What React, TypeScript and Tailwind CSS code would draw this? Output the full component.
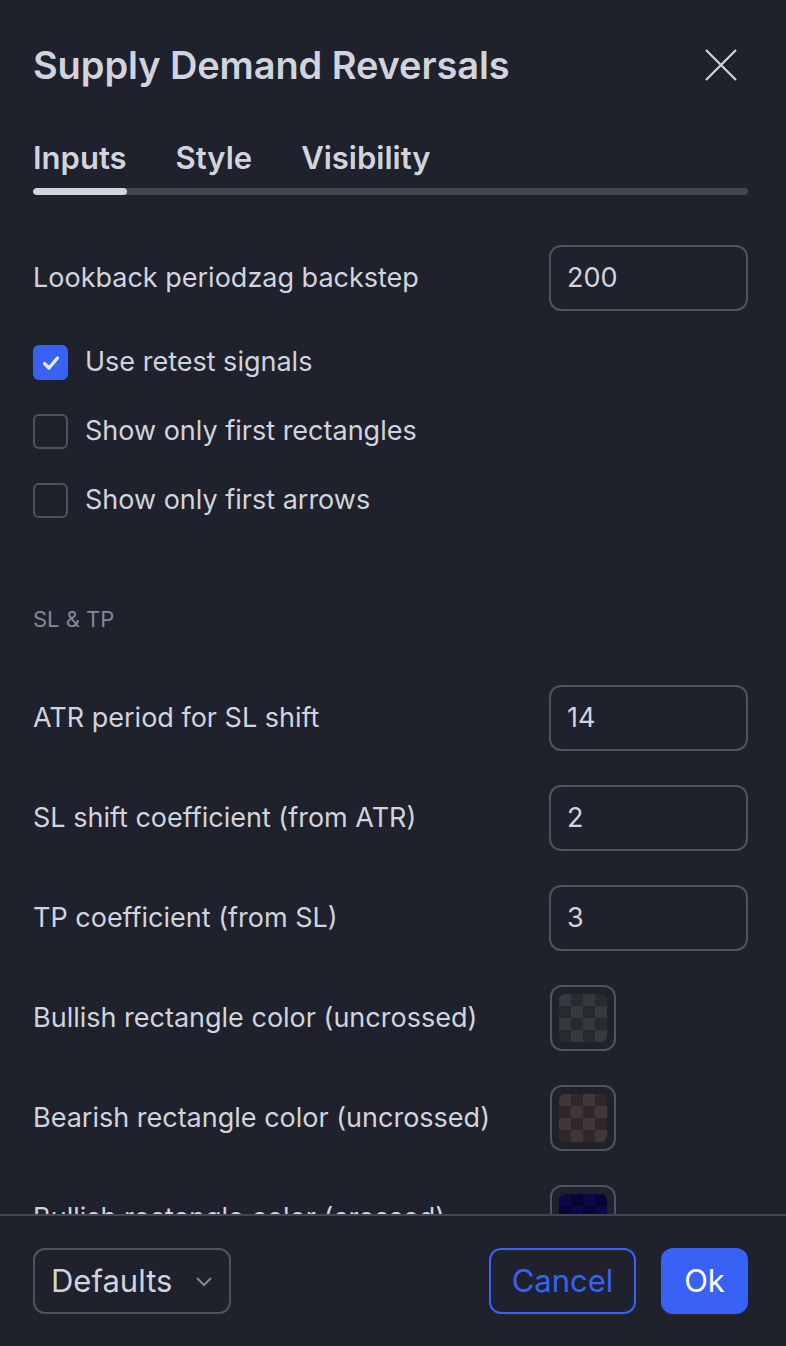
import React from "react";

const TEXT = "text-[#d1d4dc]";

function Checker({ a, b }: { a: string; b: string }) {
  const cells = [];
  for (let r = 0; r < 4; r++) {
    for (let c = 0; c < 4; c++) {
      cells.push(
        <div key={r * 4 + c} style={{ background: (r + c) % 2 === 0 ? a : b }} />
      );
    }
  }
  return (
    <div className="grid h-[48px] w-[48px] grid-cols-4 grid-rows-4 overflow-hidden rounded-[6px]">
      {cells}
    </div>
  );
}

function NumRow({ label, value }: { label: string; value: string }) {
  return (
    <div className="flex h-[100px] items-center justify-between">
      <span className="text-[27px]">{label}</span>
      <div className="flex h-[66px] w-[199px] items-center rounded-[12px] border-2 border-[#50535e] pl-[16px] text-[27px]">
        {value}
      </div>
    </div>
  );
}

function ColorRow({ label, a, b }: { label: string; a: string; b: string }) {
  return (
    <div className="flex h-[100px] items-center">
      <span className="w-[517px] text-[27px]">{label}</span>
      <div className="flex h-[66px] w-[66px] items-center justify-center rounded-[12px] border-2 border-[#50535e]">
        <Checker a={a} b={b} />
      </div>
    </div>
  );
}

function Check({ label, checked }: { label: string; checked?: boolean }) {
  return (
    <div className="flex h-[69px] items-center gap-[17px]">
      {checked ? (
        <div className="flex h-[35px] w-[35px] items-center justify-center rounded-[6px] bg-[#3861f6]">
          <svg width="22" height="22" viewBox="0 0 22 22" fill="none">
            <path d="M4.5 11.5l4.5 4.5 8.5-10" stroke="#e8eaf0" strokeWidth="3.4" strokeLinecap="round" strokeLinejoin="round" />
          </svg>
        </div>
      ) : (
        <div className="h-[35px] w-[35px] rounded-[6px] border-2 border-[#50535e]" />
      )}
      <span className="text-[27px]">{label}</span>
    </div>
  );
}

export default function App() {
  return (
    <div
      className={`flex h-[1346px] w-[786px] flex-col overflow-hidden bg-[#1f212c] ${TEXT}`}
      style={{ fontFamily: "Inter, 'Noto Sans', sans-serif" }}
    >
      <div className="flex items-center justify-between pl-[33px] pr-[38px] pt-[43px]">
        <h1 className="text-[38px] font-semibold leading-[44px] tracking-[-0.1px]">Supply Demand Reversals</h1>
        <svg width="34" height="34" viewBox="0 0 34 34" className="mr-[10px]">
          <path d="M2 2L32 32M32 2L2 32" stroke="#d1d4dc" strokeWidth="2.2" />
        </svg>
      </div>

      <div className="pl-[33px] pr-[38px] pt-[53px]">
        <div className="flex gap-[49px] text-[31px] font-semibold leading-[36px]">
          <span>Inputs</span>
          <span>Style</span>
          <span>Visibility</span>
        </div>
        <div className="mt-[12px] flex h-[7px] w-[715px] overflow-hidden rounded-full bg-[#434651]">
          <div className="h-full w-[94px] rounded-full bg-[#d1d4dc]" />
        </div>
      </div>

      <div className="flex-1 overflow-hidden pl-[33px] pr-[38px] pt-[50px]">
        <div className="flex h-[66px] items-center justify-between">
          <span className="text-[27px]">Lookback periodzag backstep</span>
          <div className="flex h-[66px] w-[199px] items-center rounded-[12px] border-2 border-[#50535e] pl-[16px] text-[27px]">
            200
          </div>
        </div>
        <div className="mt-[17px]">
          <Check label="Use retest signals" checked />
          <Check label="Show only first rectangles" />
          <Check label="Show only first arrows" />
        </div>
        <div className="mt-[71px] text-[22px] leading-[26px] text-[#868993]">SL &amp; TP</div>
        <div className="mt-[36px]">
          <NumRow label="ATR period for SL shift" value="14" />
          <NumRow label="SL shift coefficient (from ATR)" value="2" />
          <NumRow label="TP coefficient (from SL)" value="3" />
          <ColorRow label="Bullish rectangle color (uncrossed)" a="#363a40" b="#262b2c" />
          <ColorRow label="Bearish rectangle color (uncrossed)" a="#433638" b="#332628" />
          <ColorRow label="Bullish rectangle color (crossed)" a="#0a0a4a" b="#050535" />
        </div>
      </div>

      <div className="flex h-[132px] items-center justify-between border-t-2 border-[#434651] pl-[33px] pr-[38px]">
        <div className="flex h-[66px] w-[198px] items-center justify-between rounded-[12px] border-2 border-[#50535e] pl-[16px] pr-[14px] text-[31px]">
          <span>Defaults</span>
          <svg width="22" height="14" viewBox="0 0 22 14">
            <path d="M4 4l7 7 7-7" stroke="#868993" strokeWidth="2" fill="none" />
          </svg>
        </div>
        <div className="flex gap-[25px]">
          <button className="flex h-[66px] w-[147px] items-center justify-center rounded-[12px] border-2 border-[#3861f6] text-[31px] text-[#3861f6]">
            Cancel
          </button>
          <button className="flex h-[66px] w-[87px] items-center justify-center rounded-[12px] bg-[#3861f6] text-[31px] text-white">
            Ok
          </button>
        </div>
      </div>
    </div>
  );
}
